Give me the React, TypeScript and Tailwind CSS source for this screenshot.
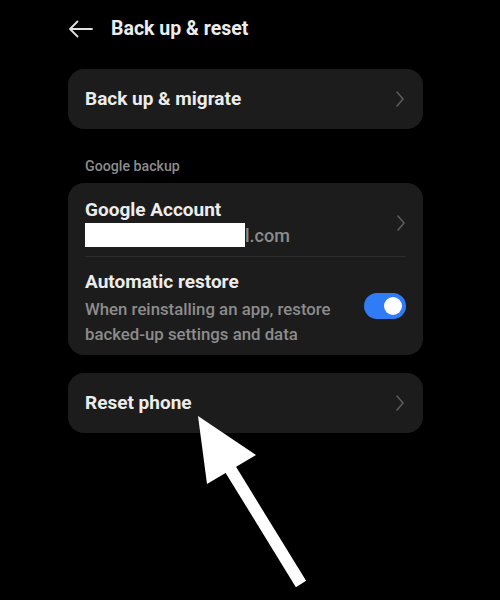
function Chevron() {
  return (
    <svg width="10" height="18" viewBox="0 0 10 18" fill="none" className="shrink-0">
      <path d="M2 2l6 7-6 7" stroke="#5c5c5c" strokeWidth="1.6" strokeLinecap="round" strokeLinejoin="round" />
    </svg>
  );
}

export default function App() {
  return (
    <div
      className="relative w-[500px] h-[600px] bg-black text-[#ececec] overflow-hidden"
      style={{ fontFamily: 'Roboto, "Noto Sans", sans-serif' }}
    >
      {/* Header */}
      <div className="flex items-center h-[54px] pl-[68px] pt-[3px]">
        <svg width="25" height="18" viewBox="0 0 25 18" fill="none">
          <path d="M24 9H2M9.5 1.5L2 9l7.5 7.5" stroke="#e0e0e0" strokeWidth="1.8" strokeLinecap="round" strokeLinejoin="round" />
        </svg>
        <span className="ml-[18px] text-[19.5px] font-bold">Back up &amp; reset</span>
      </div>

      <div className="mx-[68px] w-[355px] mt-[15px] flex flex-col">
        {/* Back up & migrate */}
        <div className="h-[60px] rounded-[16px] bg-[#1c1c1c] flex items-center justify-between pl-[17px] pr-[18px]">
          <span className="text-[19px] font-bold">Back up &amp; migrate</span>
          <Chevron />
        </div>

        <div className="mt-[27px] pl-[17px] text-[14.2px] leading-[20px] text-[#8c8c8c] font-medium">Google backup</div>

        {/* Google card */}
        <div className="mt-[7px] rounded-[16px] bg-[#1c1c1c] pl-[17px] pr-[17px] pt-[15px] pb-[8px]">
          <div className="flex items-center justify-between pb-[8px] border-b border-[#2c2c2c]">
            <div className="flex flex-col">
              <span className="text-[19px] font-bold leading-[24px]">Google Account</span>
              <div className="flex items-center h-[26px]">
                <div className="w-[160px] h-[24px] bg-white" />
                <span className="text-[18px] text-[#8c8c8c] font-medium">l.com</span>
              </div>
            </div>
            <Chevron />
          </div>
          <div className="flex items-center justify-between pt-[13px]">
            <div className="flex flex-col">
              <span className="text-[19px] font-bold leading-[24px]">Automatic restore</span>
              <span className="text-[16.8px] text-[#8c8c8c] font-medium leading-[25px] mt-[3px]">
                When reinstalling an app, restore
                <br />
                backed-up settings and data
              </span>
            </div>
            <div className="w-[42px] h-[26px] rounded-full bg-[#2f7cf6] flex items-center justify-end pr-[4px] mb-[6px]">
              <div className="w-[18px] h-[18px] rounded-full bg-white" />
            </div>
          </div>
        </div>

        {/* Reset phone */}
        <div className="mt-[18px] h-[60px] rounded-[16px] bg-[#1c1c1c] flex items-center justify-between pl-[17px] pr-[18px]">
          <span className="text-[19px] font-bold">Reset phone</span>
          <Chevron />
        </div>
      </div>

      {/* Annotation arrow */}
      <svg className="absolute left-0 top-0" width="500" height="600" viewBox="0 0 500 600">
        <polygon points="198,416 207,484 256,455" fill="#ffffff" />
        <line x1="226" y1="462" x2="301" y2="584" stroke="#ffffff" strokeWidth="12" />
      </svg>
    </div>
  );
}
